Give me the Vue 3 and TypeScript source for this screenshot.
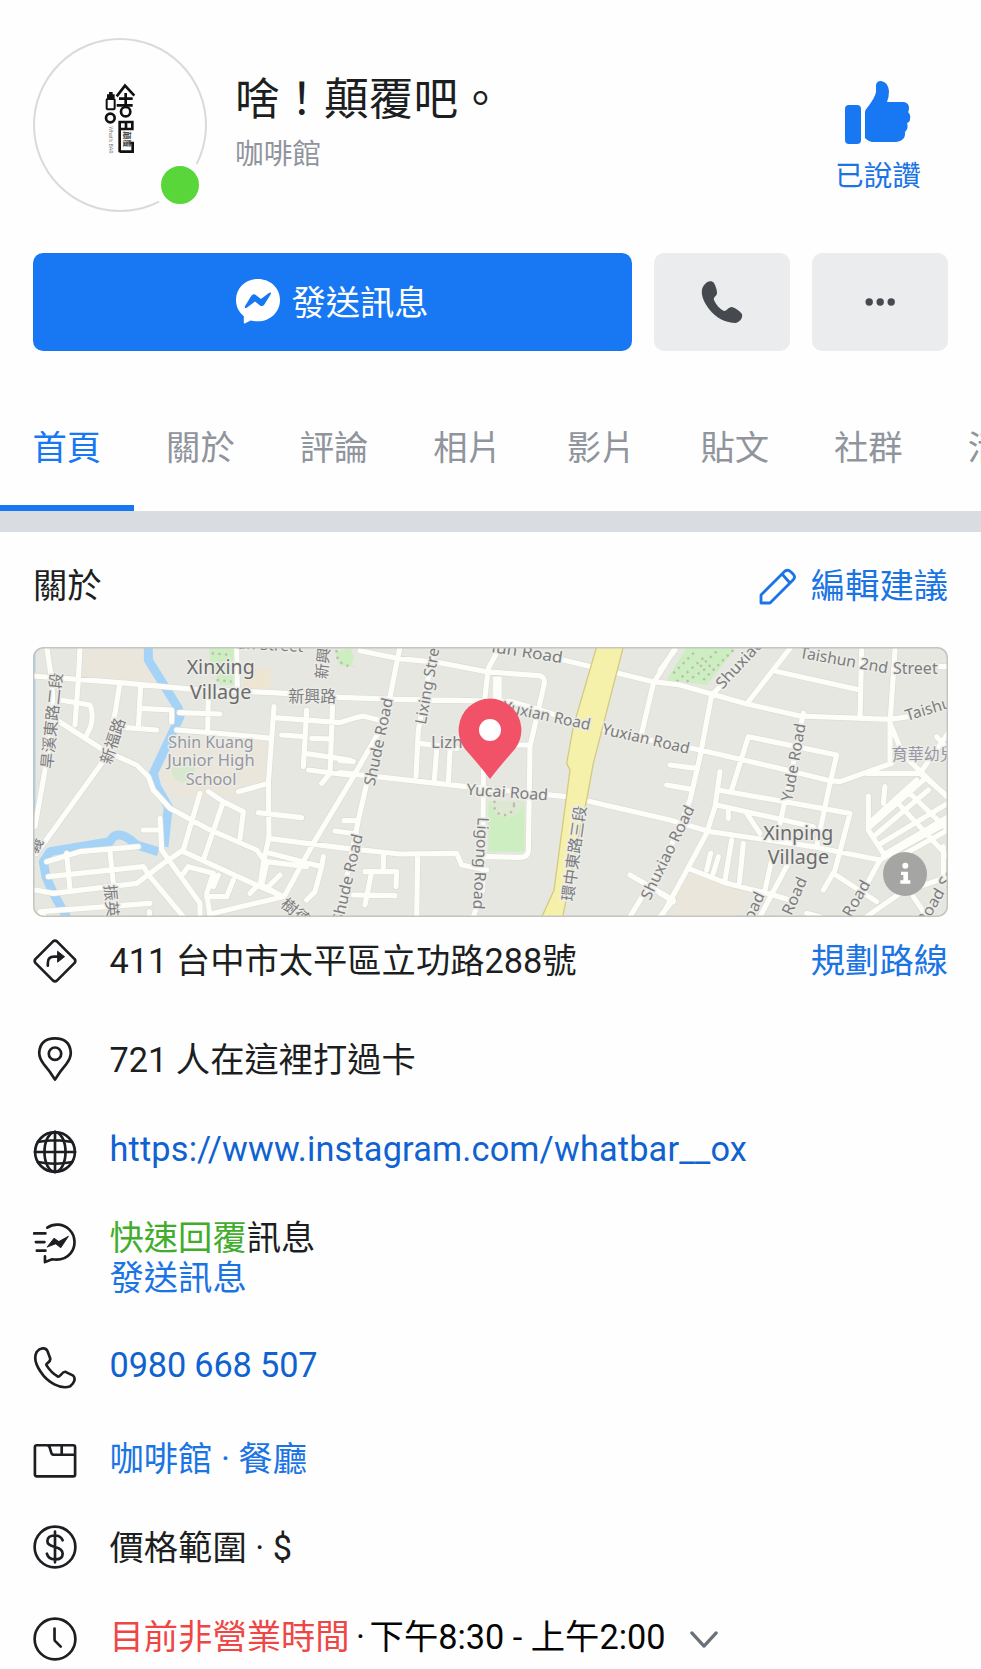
<script setup lang="ts">
interface MapLabel {
  t: string
  x: number
  y: number
  r: number
  len: number
  kind?: string
}

const tabs: string[] = ['首頁', '關於', '評論', '相片', '影片', '貼文', '社群', '活動']

const roads: string = [
  'M39 138L300 158L520 178L760 188L960 202L1130 208L1470 214L1560 240L1700 285L1830 318L2040 360L2300 420L2420 450L2460 455L2615 400',
  'M80 50L95 150L100 250L75 420L45 590M180 50L175 150L165 285M120 210L210 225Q222 250 212 290L200 315',
  'M110 270L250 360L350 405L385 440L400 480L450 535L560 595L710 660L740 700L725 765L790 800',
  'M300 158L285 250L245 400L50 670M362 165L355 295M362 235L455 240V275M310 292L410 300',
  'M478 248L600 252M565 200L563 305M470 300L620 312L755 325M650 50L652 180',
  'M762 230L745 460L747 620L730 700L720 770M745 460L655 485M715 548L845 563',
  'M762 263L960 278L1000 265L1030 258L1075 270M860 240L850 410M938 215L930 430L905 460M785 315L855 320M875 325L935 327M855 370L990 390M865 420L985 435',
  'M1140 50L1110 200L1080 300L1000 440L880 640L795 795M1045 440L1015 570L960 840M960 392L1000 394',
  'M960 428L1340 470L1640 500L1700 512L1950 570L2070 605L2380 650L2580 690L2650 650L2780 580',
  'M1020 62L1130 85L1260 98L1400 125L1555 137Q1578 140 1572 165L1530 350L1525 660Q1525 682 1500 682L1400 680',
  'M1440 50L1405 115L1395 200L1390 440L1388 780L1360 860M1240 60L1195 300L1188 440M1200 340L1310 355M1250 360L1243 450M1290 360L1285 455M1490 345H1530',
  'M745 625L960 653L1140 672L1310 670L1325 705L1400 720M1090 672V725M1035 725H1130L1128 770M1055 725L1035 825M1000 795L1125 797M1193 680L1190 860M945 603L1010 612M972 572H1010',
  'M1590 80L1900 155L1980 165L2180 222L2340 258L2610 268L2700 255M1965 55L1900 160L1865 310M1965 60L1920 120',
  'M2220 50L2075 195L2040 380L2010 510L1940 680L1830 860M2100 425L2085 530L2060 610L1990 740L1930 850M1830 735L1960 810L1920 860M1920 790L1960 815',
  'M2310 55L2180 222M2260 122L2520 180M2525 60L2520 265M2625 60L2610 280V390M2610 280L2650 375L2780 500M2760 110H2784',
  'M2185 320L2160 400L2135 480M2185 320L2450 375L2430 460L2390 650M2350 250L2320 400L2280 580M2095 480L2490 550L2445 720L2410 780M2090 525L2380 590M2125 535V565M2180 550L2220 610',
  'M1950 405L2030 415M1940 465L2015 478M2135 630L2115 750M2170 640L2165 690L2158 760M2072 670L2060 720M2095 680L2080 730M2005 715L2120 760L2240 790L2310 810M2255 690L2235 780L2180 860M2310 690L2220 860',
  'M2540 430H2700L2784 310M2545 498V600L2590 670M2595 470L2590 520M2545 595L2710 450M2560 620L2725 480M2552 575L2690 450M2575 645L2784 520M2590 675L2784 560M2630 515L2784 680M2670 490L2784 600M2700 430L2784 500M2750 320L2784 360M2620 690L2784 600',
  'M2580 690L2520 800L2480 860M2440 730L2570 815M2540 860L2640 790L2784 740M2770 650V740M2680 800L2720 860M2360 850L2400 860',
  'M80 695L180 665L355 650M85 740L370 710L390 740L490 860M140 670L150 780M270 665L280 760M45 780L100 790L350 760L430 700L490 660L540 490M60 845L390 820M420 565L425 660L540 820V860M370 600H415M60 845L75 860M388 845V860',
  'M490 665L720 770L790 800L580 850M565 485L610 515L550 690M610 515L670 545L660 625M490 730L505 710L580 730L560 790L570 860M640 750L620 800L560 800M595 735L580 770M750 670L905 710L910 680M905 710L885 785L860 810M740 695L860 710M780 735L740 775M690 790L710 770',
].join('')

const water: string =
  'M385 40V90L475 235L480 260L400 430L410 470L445 530L432 650M415 665L350 645Q290 590 270 635L90 665L70 695L78 740L100 790L145 870'
const highway: string =
  'M1730 50H1810L1720 400L1700 510L1680 600L1628 862H1565L1602 780L1650 420L1640 400L1660 290Z'
const parkDots: string = 'M1960 130L2030 60M1970 155L2060 75M2000 155L2080 100M2050 150L2140 60M2090 65L2040 110M575 70L635 75M590 150L635 155M950 60Q945 105 1000 110'

const labels: MapLabel[] = [
  { t: '旱溪東路二段', x: 95, y: 272, r: -84, len: 290 },
  { t: '新福路', x: 278, y: 333, r: -72, len: 142 },
  { t: '新興路', x: 877, y: 200, r: 0, len: 144 },
  { t: '新興', x: 908, y: 100, r: -84, len: 94 },
  { t: '振英', x: 274, y: 812, r: 85, len: 98 },
  { t: '樹德', x: 828, y: 845, r: 40, len: 98 },
  { t: '義', x: 45, y: 645, r: -60, len: 46 },
  { t: 'un Street', x: 750, y: 44, r: 3, len: 200 },
  { t: 'Shude Road', x: 1075, y: 335, r: -78, len: 268 },
  { t: 'Lixing Stre', x: 1221, y: 168, r: -80, len: 232 },
  { t: 'Shude Road', x: 982, y: 745, r: -77, len: 272 },
  { t: 'iun Road', x: 1522, y: 66, r: 9, len: 215 },
  { t: 'Yuxian Road', x: 1580, y: 256, r: 12, len: 268 },
  { t: 'Yuxian Road', x: 1878, y: 325, r: 13, len: 268 },
  { t: 'Lizhi', x: 1287, y: 338, r: 0, len: 108 },
  { t: 'Yucai Road', x: 1462, y: 486, r: 4, len: 245 },
  { t: 'Ligong Road', x: 1383, y: 700, r: 93, len: 276 },
  { t: '環中東路三段', x: 1662, y: 670, r: -82, len: 288 },
  { t: 'Shuxiao Road', x: 1942, y: 667, r: -64, len: 308 },
  { t: 'Shuxiao', x: 2158, y: 100, r: -47, len: 185 },
  { t: 'Taishun 2nd', x: 2472, y: 90, r: 10, len: 268 },
  { t: 'Street', x: 2686, y: 115, r: 0, len: 134 },
  { t: 'Taishun', x: 2738, y: 232, r: -17, len: 170 },
  { t: 'Yude Road', x: 2320, y: 397, r: -80, len: 236 },
  { t: 'Road', x: 2195, y: 842, r: -65, len: 118 },
  { t: 'ao Road', x: 2308, y: 830, r: -66, len: 190 },
  { t: 'Road', x: 2508, y: 805, r: -60, len: 118 },
  { t: 'Road Se', x: 2748, y: 800, r: -60, len: 185 },
  { t: '育華幼兒', x: 2711, y: 373, r: 0, len: 192, kind: 'soft' },
  { t: 'Shin Kuang', x: 573, y: 336, r: 0, len: 256, kind: 'school' },
  { t: 'Junior High', x: 573, y: 392, r: 0, len: 262, kind: 'school' },
  { t: 'School', x: 573, y: 447, r: 0, len: 152, kind: 'school' },
  { t: 'Xinxing', x: 602, y: 112, r: 0, len: 204, kind: 'village' },
  { t: 'Village', x: 602, y: 186, r: 0, len: 184, kind: 'village' },
  { t: 'Xinping', x: 2335, y: 608, r: 0, len: 210, kind: 'village' },
  { t: 'Village', x: 2335, y: 682, r: 0, len: 184, kind: 'village' },
]
</script>

<template>
  <main class="page">
    <header class="profile">
      <div class="avatar">
        <svg class="logo" viewBox="0 0 180 324">
          <g fill="none" stroke="#111" stroke-width="8">
            <path d="M80 76L105 44L133 74M87 83H128M107 66V102M80 103H128" />
            <circle cx="107" cy="122" r="14" />
            <rect x="50" y="84" width="24" height="31" rx="3" stroke-width="6" />
            <circle cx="61" cy="141" r="13" />
            <path d="M89 244V153H127V174H90M108 153V174M89 242H128V216H118" />
          </g>
          <path d="M51 70H57V63H68V70H74V82H51Z" fill="#111" />
          <text class="logo-cjk" transform="translate(103 181) rotate(90)">顛覆</text>
          <text class="logo-latin" transform="translate(58 166) rotate(90)">What's BAR</text>
        </svg>
        <span class="online"></span>
      </div>
      <div class="names">
        <h1>啥！顛覆吧。</h1>
        <p>咖啡館</p>
      </div>
      <div class="liked">
        <svg width="66" height="64" viewBox="0 0 66 64">
          <rect x="0" y="24" width="16" height="39" rx="4" />
          <path d="M20 31Q20 29 22 27Q30 17 31 11V5Q31 0 36 0Q43 1 44 10Q44 16 42 21H59Q64 22 64 27Q64 30 63 31Q66 34 65 38Q65 41 62 42Q64 47 60 51Q61 60 50 61H28Q24 61 20 57Z" />
        </svg>
        <span>已說讚</span>
      </div>
    </header>

    <div class="actions">
      <button class="message">
        <svg width="44" height="45" viewBox="0 0 45 46">
          <path fill="#fff" d="M22.500 0C10 0 0 9 0 21.500C0 28.500 3 34 8 38V44.500Q8 46 9.500 45.300L15 42.500C17 43 20 43.300 22.500 43.300C35 43.300 45 34 45 21.500S35 0 22.500 0Z" />
          <path fill="#1877f2" d="M9 28L15.500 17.500Q17.500 14.500 20.500 16.500L25.500 20.500L34 14Q36.500 13 35.500 15.500L29 26Q27 28.800 24.500 27L19.500 23L11 29.500Q8.500 30.500 9 28Z" />
        </svg>
        <span>發送訊息</span>
      </button>
      <button class="square">
        <svg width="42" height="42" viewBox="0 0 42 42">
          <path fill="#46494e" d="M4 3C6 0 11 -1 13 2C15 6 16 9 16 12C16 15 12 16 13 19C15 24 19 28 23 30C26 30 27 26 31 26C34 27 39 30 41 33C42 38 38 41 35 42C25 42 15 37 8 28C1 19 -2 9 4 3Z" />
        </svg>
      </button>
      <button class="square">
        <svg width="32" height="10" viewBox="0 0 32 10" fill="#46494e">
          <circle cx="5.200" cy="5" r="3.700" /><circle cx="16.200" cy="5" r="3.700" /><circle cx="27.200" cy="5" r="3.700" />
        </svg>
      </button>
    </div>

    <nav class="tabs">
      <a v-for="(tab, i) in tabs" :key="tab" :class="{ active: i === 0 }">{{ tab }}</a>
    </nav>

    <section class="about">
      <div class="heading">
        <h2>關於</h2>
        <a class="edit">
          <svg width="38" height="38" viewBox="0 0 38 38" fill="none" stroke="#1b74e4" stroke-width="2.800" stroke-linejoin="round">
            <path d="M2 35V27L26 3Q29 1 32 4L34 6Q37 9 34 12L11 35ZM23 6L31 15" />
          </svg>
          <span>編輯建議</span>
        </a>
      </div>

      <svg class="map" viewBox="39 51 2745 810" preserveAspectRatio="none">
        <rect x="39" y="51" width="2745" height="810" fill="#e7e7e1" />
        <path d="M190 51H370V80L430 170L190 145ZM480 330H740V460L640 500L460 500L420 430ZM2000 725L2180 790L2150 861H1930Z" fill="#ebe6dc" />
        <rect x="670" y="115" width="82" height="68" fill="#ede4d1" />
        <g fill="#cdeec0">
          <path d="M568 52H640V165H600L570 95ZM945 65L995 55V108H960Z" />
          <path d="M1405 515H1513V665H1405Z" />
          <path d="M2000 52H2150L2060 165L1940 150Z" />
          <path d="M960 65Q1000 55 1002 85Q995 110 960 108Z" />
          <ellipse cx="490" cy="420" rx="36" ry="38" fill="#d8e8ce" />
        </g>
        <path d="M1410 512H1513Q1510 560 1455 562Q1420 560 1410 512" fill="#dce8d1" />
        <circle cx="1452" cy="525" r="30" class="dots" />
        <path :d="parkDots" class="dots" />
        <path d="M42 51V590" stroke="#a5d3f8" stroke-width="9" fill="none" />
        <path :d="water" class="water" />
        <path :d="roads" class="casing" />
        <path :d="roads" class="road" />
        <path d="M1432 140V210" class="road wide" />
        <path :d="highway" fill="#f6f1aa" stroke="#d3ca83" stroke-width="4" />
        <text
          v-for="(l, i) in labels"
          :key="i"
          :class="['label', l.kind]"
          :transform="`translate(${l.x} ${l.y}) rotate(${l.r})`"
          :textLength="l.len"
          lengthAdjust="spacingAndGlyphs"
          dy="0.36em"
        >{{ l.t }}</text>
        <path d="M1410 447Q1378 405 1335 357A94.200 94.200 0 1 1 1485 357Q1442 405 1410 447Z" fill="#f25268" />
        <circle cx="1410" cy="300" r="33" fill="#fff" />
        <circle cx="2655" cy="732" r="66" fill="#a5a5a3" />
        <g fill="#fff">
          <circle cx="2656" cy="707" r="9" />
          <path d="M2643 725H2664V751H2671V761H2641V751H2650V735H2643Z" />
        </g>
        <rect x="41" y="53" width="2741" height="806" rx="30" fill="none" stroke="#c4c4c0" stroke-width="5" />
      </svg>

      <ul class="rows">
        <li class="r-address">
          <svg viewBox="0 0 46 46"><path d="M21 2.500Q23 .8 25 2.500L43.500 21Q45 23 43.500 25L25 43.500Q23 45 21 43.500L2.500 25Q1 23 2.500 21ZM15.500 28V25Q15.500 18.500 22 18.500H29" /><path class="solid" d="M26 13L33 18.500L26 24Z" /></svg>
          <p>411 台中市太平區立功路288號</p>
          <a class="route">規劃路線</a>
        </li>
        <li class="r-checkin">
          <svg viewBox="0 0 46 46"><path d="M23 44.500Q18 36 11 28Q6.500 22 6.500 16.500Q7.500 1.500 23 1.500T39.500 16.500Q39.500 22 35 28Q28 36 23 44.500Z" /><circle cx="23" cy="17.500" r="6.500" /></svg>
          <p>721 人在這裡打過卡</p>
        </li>
        <li class="r-site">
          <svg viewBox="0 0 46 46"><circle cx="23" cy="23" r="20.800" /><ellipse cx="23" cy="23" rx="11" ry="20.800" /><path d="M23 2V44M2 23H44M5 12.500Q23 9 41 12.500M5 33.500Q23 37 41 33.500" /></svg>
          <p class="link deep">https://www.instagram.com/whatbar__ox</p>
        </li>
        <li class="r-reply">
          <svg viewBox="0 0 46 46"><path d="M15 7C22 2 32 3 38 9C45 16 45 27 39 34C34 40 27 41 20 40L12.500 43V37M1 13H13M3 22H12M4 31H13" /><path class="solid" d="M15 27L22 18L27 21.500L37 16L29 28L24 24Z" /></svg>
          <p><span class="green">快速回覆</span>訊息<br /><span class="link">發送訊息</span></p>
        </li>
        <li class="r-phone">
          <svg viewBox="0 0 46 46"><path d="M4 6C7 2 13 1 15 5L18 13C19 17 13 18 14 20Q19 28 26 32C28 33 31 26 34 27L42 31C45 34 43 39 39 42C29 46 15 38 8 27C2 18 1 11 4 6Z" /></svg>
          <p class="link deep">0980 668 507</p>
        </li>
        <li class="r-category">
          <svg viewBox="0 0 46 46"><path d="M4 6.500H14.500Q16.500 6.500 17.500 9L19 14Q20 16.500 22 16.500H44V37Q44 39 42 39H4Q2 39 2 37V8.500Q2 6.500 4 6.500ZM16 6.500H42Q44 6.500 44 8.500V17M30 6.500V16" /></svg>
          <p class="link">咖啡館 · 餐廳</p>
        </li>
        <li class="r-price">
          <svg viewBox="0 0 46 46"><circle cx="23" cy="23" r="21.300" /><path d="M23 7V39M31 16Q29 11 23 11Q15 11 15 17Q15 21 23 23T31 30Q31 36 23 36Q16 36 14.500 30" /></svg>
          <p>價格範圍 · $</p>
        </li>
        <li class="r-hours">
          <svg viewBox="0 0 46 46"><circle cx="23" cy="23" r="21.300" /><path d="M22.500 12V23Q22.500 24 23 25L29 31" /></svg>
          <p class="black"><span class="red">目前非營業時間</span><span class="dot"> · </span>下午8:30 - 上午2:00</p>
          <svg class="chevron" viewBox="0 0 32 20"><path d="M3 3L16 17L29 3" /></svg>
        </li>
      </ul>
    </section>
  </main>
</template>

<style>
body {
  margin: 0;
  background: #fefefe;
  overflow: hidden;
}
</style>

<style scoped>
.page {
  width: 981px;
  height: 1669px;
  overflow: hidden;
  background: #fefefe;
  color: #1c1e21;
  font-family: Roboto, 'Noto Sans CJK TC', sans-serif;
  font-size: 34.3px;
}
h1, h2, p, ul { margin: 0; padding: 0; font-weight: 400; list-style: none; }
h2 { font-size: inherit; }
svg { display: block; flex: none; }

.profile {
  display: flex;
  height: 252.5px;
  padding: 37.5px 33px 0;
  box-sizing: border-box;
}
.avatar {
  position: relative;
  width: 174px;
  height: 174px;
  box-sizing: border-box;
  border: 2px solid #dadadd;
  border-radius: 50%;
  display: flex;
  justify-content: center;
  align-items: center;
}
.logo { width: 60px; height: 108px; }
.logo-cjk { font-size: 24px; font-weight: 700; fill: #444; }
.logo-latin { font-size: 16px; fill: #777; }
.online {
  position: absolute;
  left: 118px;
  top: 118px;
  width: 38px;
  height: 38px;
  border: 8px solid #fefefe;
  border-radius: 50%;
  background: #59d63a;
}
.names { margin-left: 28px; flex: 1; }
.names h1 { margin-top: 31px; font-size: 44.6px; line-height: 62px; }
.names p { margin-top: 3.5px; font-size: 28.7px; line-height: 40px; color: #90949c; }
.liked {
  width: 86px;
  padding-top: 43px;
  margin-right: 27px;
  display: flex;
  flex-direction: column;
  align-items: center;
  color: #1b74e4;
  font-size: 28.6px;
  white-space: nowrap;
}
.liked svg { fill: #1877f2; }
.liked span { margin-top: 11px; line-height: 40px; }

.actions { display: flex; gap: 22px; padding: 0 33px; height: 98px; }
button {
  border: 0;
  padding: 0;
  border-radius: 10px;
  display: flex;
  align-items: center;
  justify-content: center;
  font: inherit;
}
.message { flex: 1; background: #1877f2; color: #fff; gap: 11px; }
.message span { margin-top: -4px; }
.square { width: 136px; background: #eaecee; }

.tabs {
  display: flex;
  height: 160.5px;
  border-bottom: 21px solid #d9dce1;
  white-space: nowrap;
  overflow: hidden;
}
.tabs a {
  flex: none;
  width: 133.600px;
  height: 160.5px;
  box-sizing: border-box;
  padding-top: 72px;
  line-height: 50px;
  text-align: center;
  color: #90949c;
}
.tabs a.active { color: #1877f2; border-bottom: 6px solid #1877f2; }

.heading {
  display: flex;
  justify-content: space-between;
  align-items: center;
  height: 101px;
  padding: 0 33px;
  margin-bottom: 14px;
}
.edit { display: flex; gap: 14px; align-items: center; color: #1b74e4; }
.edit svg { margin-top: 9px; }

.map { width: 915px; height: 270px; margin: 0 33px; border-radius: 10px; }
.casing { fill: none; stroke: #dbdbd4; stroke-width: 19; stroke-linecap: round; stroke-linejoin: round; }
.road { fill: none; stroke: #fdfdf9; stroke-width: 15.5; stroke-linecap: round; stroke-linejoin: round; }
.road.wide { stroke-width: 25; stroke-linecap: butt; }
.water { fill: none; stroke: #a5d3f8; stroke-width: 27; stroke-linejoin: round; }
.dots { fill: none; stroke: #bdbcae; stroke-width: 7; stroke-dasharray: 7 13; }
.label {
  font-family: 'Noto Sans', 'Noto Sans CJK TC', sans-serif;
  font-size: 47px;
  text-anchor: middle;
  fill: #7c7c81;
  stroke: #ecece6;
  stroke-width: 9px;
  stroke-linejoin: round;
  paint-order: stroke;
}
.label.village { font-size: 58px; fill: #6b6b6f; }
.label.school { font-size: 47px; fill: #9696a0; }
.label.soft { fill: #9795a4; }

.rows li {
  display: flex;
  align-items: center;
  padding: 0 33px;
  line-height: 40.5px;
  white-space: nowrap;
}
.rows li > svg {
  width: 44px;
  height: 44px;
  fill: none;
  stroke: #1c1e21;
  stroke-width: 2.8;
  stroke-linecap: round;
  stroke-linejoin: round;
}
.rows .solid { fill: #1c1e21; stroke-width: 1; }
.rows p { margin-left: 32.5px; }
.r-address { height: 88px; }
.route { margin-left: auto; color: #1b74e4; }
.r-checkin { height: 108px; }
.rows .r-checkin p { margin-top: 2px; }
.r-site { height: 78px; }
.rows .r-site p { margin-top: -5px; letter-spacing: 0.17px; }
.r-reply { height: 104px; }
.rows .r-reply p { margin-top: 30px; }
.r-phone { height: 146px; }
.rows .r-phone p { margin-top: -5px; letter-spacing: -0.15px; }
.r-category { height: 40px; }
.rows .r-category p { margin-top: -4px; }
.r-price { height: 132px; }
.rows .r-price p { margin-top: 3px; }
.r-hours { height: 52px; }
.rows .r-hours p { margin-top: -3px; }
.r-hours .dot { letter-spacing: -2px; }
.link { color: #1b74e4; }
.link.deep { color: #0f62d0; }
.green { color: #42ad2c; }
.red { color: #ee4644; }
.black { color: #050505; }
.rows li > .chevron { width: 30px; height: 19px; margin-left: 23px; stroke: #6a7078; stroke-width: 3.5; }
</style>
